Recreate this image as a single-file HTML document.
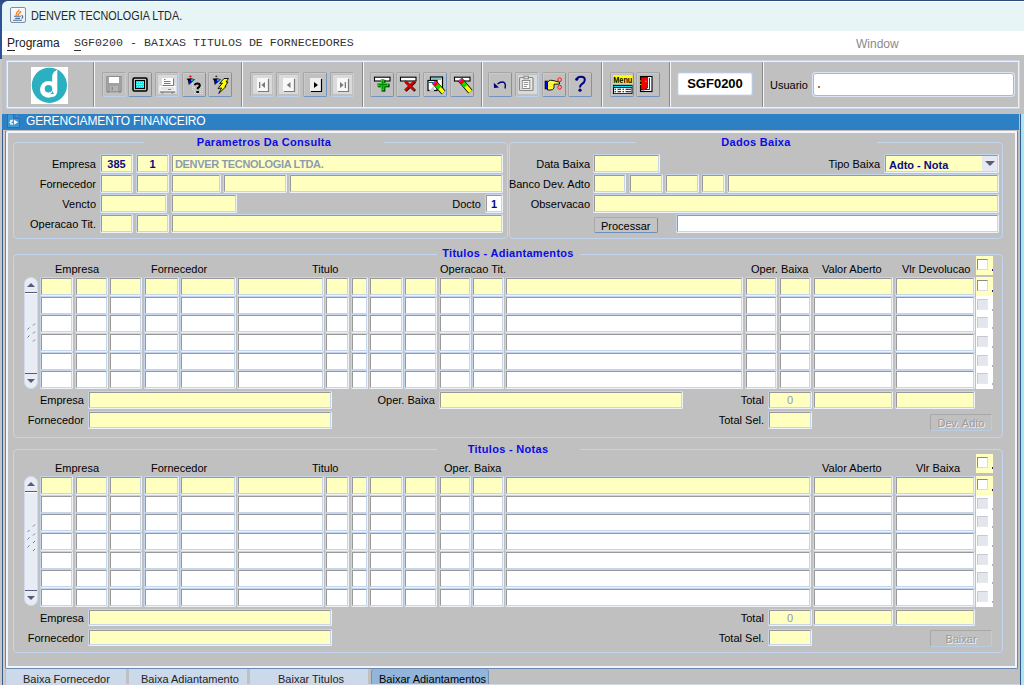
<!DOCTYPE html><html><head><meta charset="utf-8"><style>
*{margin:0;padding:0;box-sizing:border-box}
html,body{width:1024px;height:685px;overflow:hidden;background:#c0c0c0;font-family:"Liberation Sans",sans-serif}
div,span,i,b{position:absolute;display:block}
.l{font-size:11px;line-height:12px;color:#000;white-space:nowrap}
.gt{font-size:11px;font-weight:bold;line-height:12px;color:#0b0be6;white-space:nowrap;letter-spacing:0.3px}
.f{background:#c4d5ec;border-right:1px solid #eef3fa;border-bottom:1px solid #eef3fa;border-radius:2px}
.f>i{position:absolute;left:1px;top:1px;right:0;bottom:0;border-top:1px solid #999;border-left:1px solid #999;border-right:1px solid #c4d5ec;border-bottom:1px solid #c4d5ec;border-radius:1px}
.g{border:1px solid #c3d5ee;border-radius:4px}
.gap{background:#c0c0c0;height:3px}
.tb{border-top:1px solid #b4b4b4;border-left:1px solid #b4b4b4;border-right:1px solid #6e8fb8;border-bottom:1px solid #6e8fb8;border-radius:2px}
.tbd{background:#d6d6d6}
.sep{width:2px;border-left:1px solid #8a8a8a;border-right:1px solid #f4f6fa}
.v{font-size:11px;font-weight:bold;line-height:12px;color:#0a0a80;white-space:nowrap}
</style></head><body>
<div style="left:0;top:0;width:1024px;height:685px;background:#2a5294"></div>
<div style="left:0;top:0;width:1024px;height:1px;background:#30487a"></div>
<div style="left:2px;top:1px;width:1022px;height:30px;background:#e7f5f6;border-top-left-radius:6px;border-top:1px solid #f8ffff"></div>
<div style="left:2px;top:31px;width:1022px;height:24px;background:#fff"></div>
<div style="left:2px;top:55px;width:1018px;height:630px;background:#c0c0c0"></div>
<div style="left:0;top:59px;width:2px;height:626px;background:#c8c8c8"></div>
<div style="left:2px;top:55px;width:1022px;height:59px;background:#c0c0c0"></div>
<div style="left:1020px;top:114px;width:1px;height:571px;background:#3a5a8c"></div>
<div style="left:1021px;top:114px;width:3px;height:571px;background:#a8e8f4"></div>
<div style="left:10px;top:7px;width:16px;height:16px;border:1px solid #7890aa;border-radius:2px;background:linear-gradient(#fbfbfb,#e8ecf0)">
<svg width="14" height="14" style="position:absolute;left:0;top:0">
<path d="M5.3 7.8 Q4.5 5.5 6.5 3.8 Q8 2.6 8 1.4 M7.2 7.8 Q6.8 6 8.5 5 Q9.8 4.2 9.6 3" stroke="#f07818" stroke-width="1.3" fill="none"/>
<path d="M3 8.3 H9.8 M4.2 10.4 H9 M2.1 12.3 H10.9" stroke="#4a6e98" stroke-width="1.1" fill="none"/>
<path d="M10.6 7.2 Q12.8 8.6 10.6 10.6" stroke="#4a6e98" stroke-width="1.2" fill="none"/>
</svg></div>
<div style="left:31px;top:9px;font-size:12.3px;line-height:15px;color:#262626;white-space:nowrap;transform:scaleX(0.88);transform-origin:0 0">DENVER TECNOLOGIA LTDA.</div>
<div style="left:7px;top:36px;font-size:12px;line-height:14px;color:#222;white-space:nowrap"><u style="text-decoration:none;border-bottom:1px solid #222">P</u>rograma</div>
<div style="left:74px;top:36px;font-family:'Liberation Mono',monospace;font-size:11.67px;line-height:14px;color:#333;white-space:pre"><span style="position:static;display:inline;border-bottom:1px solid #333">S</span>GF0200 - BAIXAS TITULOS DE FORNECEDORES</div>
<div style="left:856px;top:37px;font-size:12px;line-height:14px;color:#8a8a8a;white-space:nowrap">Window</div>
<div style="left:6px;top:60px;width:1014px;height:49px;border:1px solid #c6d6ec;border-radius:1px"></div>
<div style="left:7px;top:61px;width:1012px;height:47px;border:1px solid #eef2f8"></div>
<div style="left:31px;top:67px;width:37px;height:37px;background:#fff">
<svg width="37" height="37" style="position:absolute;left:0;top:0">
<circle cx="18.4" cy="18.3" r="17.6" fill="#2ab0c0"/>
<circle cx="17.4" cy="22.4" r="8.4" fill="#fff"/>
<path d="M26.3 2.6 L26.3 25 Q25.5 29.5 20.5 30.6 Q23.5 28 22.5 25 L21.2 25 L21.2 8.2 Q22.5 4.5 26.3 2.6Z" fill="#fff"/>
<circle cx="17.5" cy="21.8" r="3.8" fill="#2ab0c0"/><path d="M21.3 24 Q21 26.5 19 27 L23 27 Z" fill="#2ab0c0"/>
<path d="M21.2 18 V25.5" stroke="#fff" stroke-width="0"/>
</svg></div>
<div class="sep" style="left:93px;top:62px;height:45px"></div>
<div class="sep" style="left:241px;top:62px;height:45px"></div>
<div class="sep" style="left:362px;top:62px;height:45px"></div>
<div class="sep" style="left:481px;top:62px;height:45px"></div>
<div class="sep" style="left:601px;top:62px;height:45px"></div>
<div class="sep" style="left:669px;top:62px;height:45px"></div>
<div class="sep" style="left:762px;top:62px;height:45px"></div>
<div style="left:102px;top:72px;width:24px;height:25px;border-top:1px solid #a6a6a6;border-left:1px solid #a6a6a6;border-right:1px solid #bcd0ea;border-bottom:1px solid #bcd0ea;border-radius:2px"></div>
<div style="left:103px;top:73px;width:22px;height:23px;border-top:1px solid #cacaca;border-left:1px solid #cacaca"></div>
<svg width="24" height="25" style="position:absolute;left:102px;top:72px"><path d="M4.5 4.5H19.5V19.5H4.5Z" fill="#9a9a9a" stroke="#8a8a8a" stroke-width="1" stroke-dasharray="1 1"/><rect x="5" y="5" width="14" height="14" fill="#a0a0a0"/><rect x="7" y="5" width="10" height="6" fill="#fff"/><rect x="8" y="14" width="8" height="5" fill="#b4b4b4"/><rect x="9.5" y="15" width="1.6" height="3" fill="#8a8a8a"/><path d="M5 20H8M9.5 20H10.5M11.5 20H12.5M13.5 20H14.5M16 20H19" stroke="#7a7a7a" stroke-width="1.2"/><path d="M7.5 4.5H8.5M9.5 4.5H10.5M11.5 4.5H12.5M13.5 4.5H14.5M15.5 4.5H16.5M17.5 4.5H18.5" stroke="#7a7a7a" stroke-width="1.2"/></svg>
<div style="left:128px;top:72px;width:24px;height:25px;border-top:1px solid #a6a6a6;border-left:1px solid #a6a6a6;border-right:1px solid #7294bf;border-bottom:1px solid #7294bf;border-radius:2px"></div>
<div style="left:129px;top:73px;width:22px;height:23px;border-top:1px solid #cacaca;border-left:1px solid #cacaca"></div>
<svg width="24" height="25" style="position:absolute;left:128px;top:72px"><rect x="5" y="6" width="14" height="13" rx="1.5" fill="#c0c0c0" stroke="#000" stroke-width="1.6"/><rect x="7.5" y="8.5" width="9" height="8" fill="#00e8f0" stroke="#000" stroke-width="1"/><g fill="#fff"><rect x="9" y="10" width="1" height="1"/><rect x="11" y="10" width="1" height="1"/><rect x="13" y="10" width="1" height="1"/><rect x="15" y="10" width="1" height="1"/><rect x="8" y="12" width="8" height="0.8" fill="#7fd"/><rect x="9" y="14" width="1" height="1"/><rect x="11" y="14" width="1" height="1"/><rect x="13" y="14" width="1" height="1"/><rect x="15" y="14" width="1" height="1"/></g></svg>
<div style="left:155px;top:72px;width:24px;height:25px;border-top:1px solid #a6a6a6;border-left:1px solid #a6a6a6;border-right:1px solid #bcd0ea;border-bottom:1px solid #bcd0ea;border-radius:2px"></div>
<div style="left:156px;top:73px;width:22px;height:23px;border-top:1px solid #cacaca;border-left:1px solid #cacaca"></div>
<div style="left:158px;top:75px;width:19px;height:19px;background:#dadada"></div>
<svg width="24" height="25" style="position:absolute;left:155px;top:72px"><rect x="7" y="6" width="11" height="8" fill="#fff"/><path d="M7.5 13.5H18.5V6.5" stroke="#777" stroke-width="1" fill="none"/><path d="M9 7.5H10.5M9 9.5H15.5M9 11.5H15.5" stroke="#777" stroke-width="1"/><rect x="5" y="14.5" width="15" height="4.5" fill="#e4e4e4" stroke="#fff" stroke-width="1"/><path d="M13 17.5h3" stroke="#888"/><path d="M5 20H20" stroke="#777" stroke-width="1.2"/><path d="M6.5 21H8.5M16.5 21H18.5" stroke="#777" stroke-width="1.2"/></svg>
<div style="left:182px;top:72px;width:24px;height:25px;border-top:1px solid #a6a6a6;border-left:1px solid #a6a6a6;border-right:1px solid #7294bf;border-bottom:1px solid #7294bf;border-radius:2px"></div>
<div style="left:183px;top:73px;width:22px;height:23px;border-top:1px solid #cacaca;border-left:1px solid #cacaca"></div>
<svg width="24" height="25" style="position:absolute;left:182px;top:72px"><path d="M7.5 4.3H9.2" stroke="#000" stroke-width="1"/><path d="M4.5 6.8 L6 8.5 L6.8 13 L13 7.2 L9 6.3Z" fill="#000"/><path d="M6.5 9 L7.2 12 L11 8.5 L8 8.3Z" fill="#0000ff"/><path d="M8.5 7.5 L12 7.3 L9.8 9.3Z" fill="#00ffff"/><circle cx="8.5" cy="4.6" r="0.9" fill="#f00"/><rect x="10.0" y="11.0" width="1" height="1" fill="#ffff00"/><rect x="12.0" y="11.0" width="1" height="1" fill="#ffff00"/><rect x="10.0" y="13.0" width="1" height="1" fill="#ffff00"/><rect x="10.0" y="15.0" width="1" height="1" fill="#ffff00"/><rect x="12.0" y="15.0" width="1" height="1" fill="#ffff00"/><rect x="10.0" y="17.0" width="1" height="1" fill="#ffff00"/><rect x="12.0" y="17.0" width="1" height="1" fill="#ffff00"/><rect x="12.0" y="19.0" width="1" height="1" fill="#ffff00"/><rect x="12.0" y="21.0" width="1" height="1" fill="#ffff00"/><rect x="14.0" y="21.0" width="1" height="1" fill="#ffff00"/><rect x="16.0" y="21.0" width="1" height="1" fill="#ffff00"/><rect x="18.0" y="21.0" width="1" height="1" fill="#ffff00"/><rect x="20.0" y="21.0" width="1" height="1" fill="#ffff00"/><rect x="18.0" y="19.0" width="1" height="1" fill="#ffff00"/><rect x="20.0" y="19.0" width="1" height="1" fill="#ffff00"/><rect x="18.0" y="17.0" width="1" height="1" fill="#ffff00"/><rect x="20.0" y="17.0" width="1" height="1" fill="#ffff00"/><rect x="18.0" y="15.0" width="1" height="1" fill="#ffff00"/><rect x="20.0" y="15.0" width="1" height="1" fill="#ffff00"/><rect x="20.0" y="13.0" width="1" height="1" fill="#ffff00"/><path d="M13 13.2 Q13 11.5 15.3 11.5 Q17.8 11.5 17.8 13.5 Q17.8 15 15.8 16 V17.3" stroke="#000" stroke-width="2" fill="none"/><rect x="14.3" y="19" width="2.6" height="2" fill="#000"/></svg>
<div style="left:208px;top:72px;width:24px;height:25px;border-top:1px solid #a6a6a6;border-left:1px solid #a6a6a6;border-right:1px solid #7294bf;border-bottom:1px solid #7294bf;border-radius:2px"></div>
<div style="left:209px;top:73px;width:22px;height:23px;border-top:1px solid #cacaca;border-left:1px solid #cacaca"></div>
<svg width="24" height="25" style="position:absolute;left:208px;top:72px"><path d="M7.5 4.3H9.2" stroke="#000" stroke-width="1"/><path d="M4.5 6.8 L6 8.5 L6.8 13 L13 7.2 L9 6.3Z" fill="#000"/><path d="M6.5 9 L7.2 12 L11 8.5 L8 8.3Z" fill="#0000ff"/><path d="M8.5 7.5 L12 7.3 L9.8 9.3Z" fill="#00ffff"/><path d="M16 6.5 L20.5 6.5 L18 10 L20 10 L17 14.5 L18 14.5 L10.7 21.5 L13.5 16 L10 16.5 L14.5 11 L11.5 11.5 Z" fill="#ffff00" stroke="#000" stroke-width="0.9"/><path d="M11.5 11.5 L9.5 16.5" stroke="#9a9ab0" stroke-width="0.8"/></svg>
<div style="left:250px;top:72px;width:24px;height:25px;border-top:1px solid #a6a6a6;border-left:1px solid #a6a6a6;border-right:1px solid #bcd0ea;border-bottom:1px solid #bcd0ea;border-radius:2px"></div>
<div style="left:251px;top:73px;width:22px;height:23px;border-top:1px solid #cacaca;border-left:1px solid #cacaca"></div>
<div style="left:253px;top:75px;width:19px;height:19px;background:#dadada"></div>
<svg width="24" height="25" style="position:absolute;left:250px;top:72px"><rect x="7" y="6" width="11" height="13" fill="#f8f8f8"/><path d="M8 19.5H18.5V7" stroke="#7a7a7a" stroke-width="1.2" fill="none"/><rect x="9" y="10" width="1.3" height="6" fill="#7a7a7a"/><path d="M15 10L11.3 13L15 16Z" fill="#7a7a7a"/></svg>
<div style="left:276px;top:72px;width:24px;height:25px;border-top:1px solid #a6a6a6;border-left:1px solid #a6a6a6;border-right:1px solid #bcd0ea;border-bottom:1px solid #bcd0ea;border-radius:2px"></div>
<div style="left:277px;top:73px;width:22px;height:23px;border-top:1px solid #cacaca;border-left:1px solid #cacaca"></div>
<div style="left:279px;top:75px;width:19px;height:19px;background:#dadada"></div>
<svg width="24" height="25" style="position:absolute;left:276px;top:72px"><rect x="7" y="6" width="11" height="13" fill="#f8f8f8"/><path d="M8 19.5H18.5V7" stroke="#7a7a7a" stroke-width="1.2" fill="none"/><path d="M14.5 10L10.8 13L14.5 16Z" fill="#7a7a7a"/></svg>
<div style="left:303px;top:72px;width:24px;height:25px;border-top:1px solid #a6a6a6;border-left:1px solid #a6a6a6;border-right:1px solid #7294bf;border-bottom:1px solid #7294bf;border-radius:2px"></div>
<div style="left:304px;top:73px;width:22px;height:23px;border-top:1px solid #cacaca;border-left:1px solid #cacaca"></div>
<svg width="24" height="25" style="position:absolute;left:303px;top:72px"><rect x="7" y="6" width="11" height="13" fill="#f0f0f0"/><path d="M8 19.5H18.5V7" stroke="#000" stroke-width="1.2" fill="none"/><path d="M11 10L15 13L11 16Z" fill="#000"/></svg>
<div style="left:330px;top:72px;width:24px;height:25px;border-top:1px solid #a6a6a6;border-left:1px solid #a6a6a6;border-right:1px solid #bcd0ea;border-bottom:1px solid #bcd0ea;border-radius:2px"></div>
<div style="left:331px;top:73px;width:22px;height:23px;border-top:1px solid #cacaca;border-left:1px solid #cacaca"></div>
<div style="left:333px;top:75px;width:19px;height:19px;background:#dadada"></div>
<svg width="24" height="25" style="position:absolute;left:330px;top:72px"><rect x="7" y="6" width="11" height="13" fill="#f8f8f8"/><path d="M8 19.5H18.5V7" stroke="#7a7a7a" stroke-width="1.2" fill="none"/><rect x="14.7" y="10" width="1.3" height="6" fill="#7a7a7a"/><path d="M10 10L13.7 13L10 16Z" fill="#7a7a7a"/></svg>
<div style="left:370px;top:72px;width:24px;height:25px;border-top:1px solid #a6a6a6;border-left:1px solid #a6a6a6;border-right:1px solid #7294bf;border-bottom:1px solid #7294bf;border-radius:2px"></div>
<div style="left:371px;top:73px;width:22px;height:23px;border-top:1px solid #cacaca;border-left:1px solid #cacaca"></div>
<svg width="24" height="25" style="position:absolute;left:370px;top:72px"><rect x="4.5" y="5.2" width="15.5" height="3.8" fill="#fff" stroke="#000" stroke-width="1.1"/><path d="M13.5 8V19.5 M8 13.5H19.5" stroke="#000" stroke-width="3.6"/><path d="M12.7 7V18.5 M7 12.7H18.5" stroke="#00e800" stroke-width="3.6"/><path d="M12.7 8.5V17 M8.5 12.7H17" stroke="#008800" stroke-width="1.2"/></svg>
<div style="left:396px;top:72px;width:24px;height:25px;border-top:1px solid #a6a6a6;border-left:1px solid #a6a6a6;border-right:1px solid #7294bf;border-bottom:1px solid #7294bf;border-radius:2px"></div>
<div style="left:397px;top:73px;width:22px;height:23px;border-top:1px solid #cacaca;border-left:1px solid #cacaca"></div>
<svg width="24" height="25" style="position:absolute;left:396px;top:72px"><rect x="4.5" y="5.2" width="15.5" height="3.8" fill="#fff" stroke="#000" stroke-width="1.1"/><path d="M9 9.2L18.5 18.3M18.5 9.2L9 18.3" stroke="#000" stroke-width="2.6" transform="translate(0.6,0.6)"/><path d="M9 9.2L18.5 18.3M18.5 9.2L9 18.3" stroke="#d40000" stroke-width="2.4"/></svg>
<div style="left:423px;top:72px;width:24px;height:25px;border-top:1px solid #a6a6a6;border-left:1px solid #a6a6a6;border-right:1px solid #7294bf;border-bottom:1px solid #7294bf;border-radius:2px"></div>
<div style="left:424px;top:73px;width:22px;height:23px;border-top:1px solid #cacaca;border-left:1px solid #cacaca"></div>
<svg width="24" height="25" style="position:absolute;left:423px;top:72px"><rect x="7.5" y="5" width="12" height="12" fill="#fff" stroke="#000" stroke-width="1.2"/><path d="M8.5 7H18.5" stroke="#008888" stroke-width="1"/><rect x="5" y="8.5" width="9" height="10" fill="#fff" stroke="#000" stroke-width="1.2"/><path d="M6 10.5H13" stroke="#008888" stroke-width="1"/><path d="M6 19 L11 14 V19Z" fill="#c8c8c8"/><path d="M11 10 L20.5 20.5" stroke="#000" stroke-width="5.4"/><path d="M11 10 L20.5 20.5" stroke="#ffff00" stroke-width="3.8"/><path d="M11 10 L14 13.5" stroke="#ff0000" stroke-width="3.8"/><path d="M11 10 L12 11" stroke="#ff00ff" stroke-width="3.8"/><path d="M14 13.5 L16.5 16.3" stroke="#00e000" stroke-width="3.8"/></svg>
<div style="left:450px;top:72px;width:24px;height:25px;border-top:1px solid #a6a6a6;border-left:1px solid #a6a6a6;border-right:1px solid #7294bf;border-bottom:1px solid #7294bf;border-radius:2px"></div>
<div style="left:451px;top:73px;width:22px;height:23px;border-top:1px solid #cacaca;border-left:1px solid #cacaca"></div>
<svg width="24" height="25" style="position:absolute;left:450px;top:72px"><rect x="4.5" y="5.2" width="15.5" height="3.8" fill="#fff" stroke="#000" stroke-width="1.1"/><path d="M10 7.5 L20.5 19.8" stroke="#000" stroke-width="5.4"/><path d="M10 7.5 L20.5 19.8" stroke="#ffff00" stroke-width="3.8"/><path d="M10 7.5 L13.2 11.2" stroke="#ff0000" stroke-width="3.8"/><path d="M10 7.5 L11 8.7" stroke="#ff00ff" stroke-width="3.8"/><path d="M13.2 11.2 L15.8 14.3" stroke="#00e000" stroke-width="3.8"/></svg>
<div style="left:488px;top:72px;width:24px;height:25px;border-top:1px solid #a6a6a6;border-left:1px solid #a6a6a6;border-right:1px solid #7294bf;border-bottom:1px solid #7294bf;border-radius:2px"></div>
<div style="left:489px;top:73px;width:22px;height:23px;border-top:1px solid #cacaca;border-left:1px solid #cacaca"></div>
<svg width="24" height="25" style="position:absolute;left:488px;top:72px"><path d="M9.5 12 Q12.5 9.5 15.5 10.2 Q18.2 11.5 17 16.5" stroke="#000080" stroke-width="1.4" fill="none"/><path d="M5.8 10.8 L6 16 L11 15.5Z" fill="#000080"/></svg>
<div style="left:515px;top:72px;width:24px;height:25px;border-top:1px solid #a6a6a6;border-left:1px solid #a6a6a6;border-right:1px solid #bcd0ea;border-bottom:1px solid #bcd0ea;border-radius:2px"></div>
<div style="left:516px;top:73px;width:22px;height:23px;border-top:1px solid #cacaca;border-left:1px solid #cacaca"></div>
<div style="left:518px;top:75px;width:19px;height:19px;background:#dadada"></div>
<svg width="24" height="25" style="position:absolute;left:515px;top:72px"><rect x="4.5" y="5.5" width="13.5" height="13" rx="1" fill="#e8e8e8" stroke="#8a8a8a" stroke-width="1.2"/><rect x="7.3" y="8.5" width="7.5" height="8" fill="#fff" stroke="#8a8a8a" stroke-width="1"/><rect x="8.8" y="4.2" width="4.6" height="2.6" fill="#ddd" stroke="#8a8a8a" stroke-width="1"/><path d="M8.8 10.5H13.3M8.8 12.5H13.3M8.8 14.5H12" stroke="#8a8a8a" stroke-width="0.9"/></svg>
<div style="left:542px;top:72px;width:24px;height:25px;border-top:1px solid #a6a6a6;border-left:1px solid #a6a6a6;border-right:1px solid #7294bf;border-bottom:1px solid #7294bf;border-radius:2px"></div>
<div style="left:543px;top:73px;width:22px;height:23px;border-top:1px solid #cacaca;border-left:1px solid #cacaca"></div>
<svg width="24" height="25" style="position:absolute;left:542px;top:72px"><rect x="3" y="9" width="2.5" height="8" fill="#0000ff" stroke="#000" stroke-width="0.6"/><path d="M5.5 10 Q8 7.2 11 8.5 L17.5 10.2 V12 L12 12.2 V16 Q11 18.3 8 18 H5.5Z" fill="#ffff40" stroke="#000" stroke-width="0.9"/><path d="M7 11v5M9 11v5M11 12v4" stroke="#c8b800" stroke-width="0.5" stroke-dasharray="0.8 0.8"/><ellipse cx="17.6" cy="7.8" rx="1.8" ry="2" fill="none" stroke="#f00" stroke-width="0.9"/><ellipse cx="17.6" cy="15.2" rx="1.8" ry="2" fill="none" stroke="#f00" stroke-width="0.9"/></svg>
<div style="left:568px;top:72px;width:24px;height:25px;border-top:1px solid #a6a6a6;border-left:1px solid #a6a6a6;border-right:1px solid #7294bf;border-bottom:1px solid #7294bf;border-radius:2px"></div>
<div style="left:569px;top:73px;width:22px;height:23px;border-top:1px solid #cacaca;border-left:1px solid #cacaca"></div>
<svg width="24" height="25" style="position:absolute;left:568px;top:72px"><path d="M8.6 7.6 Q9.6 4.8 13 4.8 Q16.8 4.8 16.8 8 Q16.8 10.2 13.8 12.2 Q12 13.3 12 15.5" stroke="#000080" stroke-width="2" fill="none"/><circle cx="8.7" cy="7.3" r="1.5" fill="#000080"/><circle cx="12" cy="18.2" r="1.6" fill="#000080"/></svg>
<div style="left:610px;top:72px;width:24px;height:25px;border-top:1px solid #a6a6a6;border-left:1px solid #a6a6a6;border-right:1px solid #7294bf;border-bottom:1px solid #7294bf;border-radius:2px"></div>
<div style="left:611px;top:73px;width:22px;height:23px;border-top:1px solid #cacaca;border-left:1px solid #cacaca"></div>
<svg width="24" height="25" style="position:absolute;left:610px;top:72px"><rect x="3" y="3.2" width="19.5" height="8.3" fill="#ffff00"/><text x="3.3" y="10.8" font-family="Liberation Sans" font-weight="bold" font-size="9" fill="#000" textLength="19" lengthAdjust="spacingAndGlyphs">Menu</text><rect x="3" y="12.9" width="19.5" height="9.1" fill="#000"/><rect x="3.5" y="13.8" width="18.5" height="1.4" fill="#00e0f0"/><rect x="4" y="16" width="17.5" height="5.2" fill="#fff"/><path d="M4.5 17.3H6M7.5 17.3H11M12.5 17.3H14M15.5 17.3H21M4.5 19.8H6M7.5 19.8H11M12.5 19.8H14M15.5 19.8H21" stroke="#000" stroke-width="1.1"/></svg>
<div style="left:636px;top:72px;width:24px;height:25px;border-top:1px solid #a6a6a6;border-left:1px solid #a6a6a6;border-right:1px solid #7294bf;border-bottom:1px solid #7294bf;border-radius:2px"></div>
<div style="left:637px;top:73px;width:22px;height:23px;border-top:1px solid #cacaca;border-left:1px solid #cacaca"></div>
<svg width="24" height="25" style="position:absolute;left:636px;top:72px"><rect x="4.5" y="4.5" width="11.5" height="15" fill="#fff" stroke="#000" stroke-width="1.1"/><path d="M13.5 6V17.5H9" stroke="#000" stroke-width="0.8" fill="none"/><path d="M4.8 5 L11.5 5 L11.5 16 L8 18 L4.8 18Z" fill="#f00000" stroke="#000" stroke-width="0.6"/><rect x="9.3" y="8.8" width="1" height="1" fill="#ff0"/><rect x="4.2" y="8.5" width="1" height="1" fill="#ff0"/><rect x="4.2" y="12" width="1" height="1" fill="#ff0"/></svg>
<div style="left:677px;top:72px;width:76px;height:24px;background:#fff;border:1px solid #b8c8e0;border-radius:3px;box-shadow:inset 0 0 0 1px #e8eef6"></div>
<div style="left:677px;top:75px;width:76px;text-align:center;font-size:13px;font-weight:bold;line-height:17px;color:#000">SGF0200</div>
<div class="l" style="left:770px;top:79px;">Usuario</div>
<div style="left:813px;top:73px;width:201px;height:23px;background:#fff;border:1px solid #a8b8d0;border-radius:3px;box-shadow:0 0 0 1px #dbe4f0"></div>
<div style="left:818px;top:86px;width:2px;height:2px;background:#c07030"></div>
<div style="left:2px;top:114px;width:1017px;height:16px;background:#2e80c4"></div>
<svg width="14" height="15" style="position:absolute;left:7px;top:114px">
<path d="M0.5 0 H6.5 V4.5 H12.5 V13.5 H0.5Z" fill="#3d98d8" stroke="#2a70b0" stroke-width="1"/>
<rect x="9" y="1.5" width="2" height="1" fill="#4aa0dc"/>
<path d="M5.8 5.2 L4.6 6.3 L3.2 5.8 L3.3 7.4 L2 8.3 L3.3 9.2 L3.2 10.8 L4.6 10.3 L5.8 11.4 Z" fill="#fff"/>
<circle cx="5.2" cy="8.3" r="0.9" fill="#3d98d8"/>
<path d="M7 5.8 L11 8.3 L7 10.8Z" fill="#fff"/></svg>
<div style="left:26px;top:114px;font-size:12px;line-height:14px;color:#fff;white-space:nowrap;letter-spacing:-0.15px">GERENCIAMENTO FINANCEIRO</div>
<div style="left:2px;top:130px;width:1px;height:555px;background:#3a5a8c"></div>
<div style="left:3px;top:130px;width:2px;height:555px;background:#d0ccc4"></div>
<div style="left:5px;top:131px;width:1013px;height:538px;border:1px solid #6a88b0;border-top:none;border-radius:0 0 2px 2px"></div>
<div style="left:6px;top:131px;width:1011px;height:537px;border:2px solid #f2f6fc;border-radius:2px 0 1px 1px"></div>
<div class="g" style="left:13px;top:142px;width:495px;height:97px"></div>
<div class="gap" style="left:144px;top:141px;width:240px"></div>
<div class="gt" style="left:114px;width:300px;text-align:center;top:136px;">Parametros Da Consulta</div>
<div class="g" style="left:509px;top:142px;width:494px;height:97px"></div>
<div class="gap" style="left:636px;top:141px;width:241px"></div>
<div class="gt" style="left:606px;width:300px;text-align:center;top:136px;">Dados Baixa</div>
<div class="l" style="right:928px;top:158px;">Empresa</div>
<div class="l" style="right:928px;top:178px;">Fornecedor</div>
<div class="l" style="right:928px;top:198px;">Vencto</div>
<div class="l" style="right:928px;top:218px;">Operacao Tit.</div>
<div class="f" style="left:100px;top:154px;width:33px;height:19px;"><i style="background:#ffffc0"></i></div>
<div class="f" style="left:136px;top:154px;width:33px;height:19px;"><i style="background:#ffffc0"></i></div>
<div class="f" style="left:171px;top:154px;width:332px;height:19px;"><i style="background:#ffffc0"></i></div>
<div class="v" style="left:100px;top:158px;width:33px;text-align:center">385</div>
<div class="v" style="left:136px;top:158px;width:33px;text-align:center">1</div>
<div class="v" style="left:175px;top:158px;color:#8c9cb0;letter-spacing:-0.35px">DENVER TECNOLOGIA LTDA.</div>
<div class="f" style="left:100px;top:174px;width:33px;height:19px;"><i style="background:#ffffc0"></i></div>
<div class="f" style="left:136px;top:174px;width:33px;height:19px;"><i style="background:#ffffc0"></i></div>
<div class="f" style="left:171px;top:174px;width:50px;height:19px;"><i style="background:#ffffc0"></i></div>
<div class="f" style="left:223px;top:174px;width:64px;height:19px;"><i style="background:#ffffc0"></i></div>
<div class="f" style="left:289px;top:174px;width:214px;height:19px;"><i style="background:#ffffc0"></i></div>
<div class="f" style="left:100px;top:194px;width:67px;height:19px;"><i style="background:#ffffc0"></i></div>
<div class="f" style="left:171px;top:194px;width:66px;height:19px;"><i style="background:#ffffc0"></i></div>
<div class="l" style="right:543px;top:198px;">Docto</div>
<div class="f" style="left:485px;top:194px;width:18px;height:19px;"><i style="background:#fff"></i></div>
<div class="v" style="left:485px;top:198px;width:18px;text-align:center">1</div>
<div class="f" style="left:100px;top:214px;width:33px;height:19px;"><i style="background:#ffffc0"></i></div>
<div class="f" style="left:136px;top:214px;width:33px;height:19px;"><i style="background:#ffffc0"></i></div>
<div class="f" style="left:171px;top:214px;width:332px;height:19px;"><i style="background:#ffffc0"></i></div>
<div class="l" style="right:434px;top:158px;">Data Baixa</div>
<div class="f" style="left:593px;top:154px;width:67px;height:19px;"><i style="background:#ffffc0"></i></div>
<div class="l" style="right:144px;top:158px;">Tipo Baixa</div>
<div class="f" style="left:884px;top:154px;width:115px;height:19px;"><i style="background:#ffffc0"></i></div>
<div style="left:982px;top:156px;width:15px;height:15px;background:#e6e8f2"></div>
<svg width="10" height="6" style="position:absolute;left:985px;top:161px"><path d="M0 0H10L5 5Z" fill="#5c5c70"/></svg>
<div class="v" style="left:889px;top:159px;color:#0a0a80">Adto - Nota</div>
<div class="l" style="right:434px;top:178px;">Banco Dev. Adto</div>
<div class="f" style="left:593px;top:174px;width:33px;height:19px;"><i style="background:#ffffc0"></i></div>
<div class="f" style="left:629px;top:174px;width:34px;height:19px;"><i style="background:#ffffc0"></i></div>
<div class="f" style="left:665px;top:174px;width:34px;height:19px;"><i style="background:#ffffc0"></i></div>
<div class="f" style="left:701px;top:174px;width:24px;height:19px;"><i style="background:#ffffc0"></i></div>
<div class="f" style="left:727px;top:174px;width:272px;height:19px;"><i style="background:#ffffc0"></i></div>
<div class="l" style="right:434px;top:198px;">Observacao</div>
<div class="f" style="left:593px;top:194px;width:406px;height:19px;"><i style="background:#ffffc0"></i></div>
<div style="left:594px;top:217px;width:64px;height:16px;background:#c3c3c3;border:1px solid #aaaaaa;border-right-color:#7090b8;border-bottom-color:#7090b8;border-radius:2px"></div>
<div class="l" style="left:601px;top:220px;">Processar</div>
<div class="f" style="left:676px;top:214px;width:323px;height:19px;"><i style="background:#fff"></i></div>
<div class="g" style="left:13px;top:254px;width:990px;height:184px"></div>
<div class="gap" style="left:437px;top:253px;width:143px"></div>
<div class="gt" style="left:358px;width:300px;text-align:center;top:247px;">Titulos - Adiantamentos</div>
<div class="l" style="left:55px;top:263px;">Empresa</div>
<div class="l" style="left:151px;top:263px;">Fornecedor</div>
<div class="l" style="left:312px;top:263px;">Titulo</div>
<div class="l" style="left:440px;top:263px;">Operacao Tit.</div>
<div class="l" style="left:751px;top:263px;">Oper. Baixa</div>
<div class="l" style="left:822px;top:263px;">Valor Aberto</div>
<div class="l" style="left:902px;top:263px;">Vlr Devolucao</div>
<div style="left:976px;top:256px;width:17px;height:19px;background:#ffffc0"></div>
<div style="left:977px;top:259px;width:11px;height:11px;background:#fff;border:1px solid #8a8a8a;border-right-color:#dcdcdc;border-bottom-color:#dcdcdc"></div>
<div style="left:992px;top:269px;width:1px;height:2px;background:#30208a"></div>
<div class="f" style="left:40px;top:277px;width:33px;height:19px;"><i style="background:#ffffc0"></i></div>
<div class="f" style="left:75px;top:277px;width:33px;height:19px;"><i style="background:#ffffc0"></i></div>
<div class="f" style="left:109px;top:277px;width:33px;height:19px;"><i style="background:#ffffc0"></i></div>
<div class="f" style="left:144px;top:277px;width:35px;height:19px;"><i style="background:#ffffc0"></i></div>
<div class="f" style="left:180px;top:277px;width:56px;height:19px;"><i style="background:#ffffc0"></i></div>
<div class="f" style="left:237px;top:277px;width:87px;height:19px;"><i style="background:#ffffc0"></i></div>
<div class="f" style="left:325px;top:277px;width:24px;height:19px;"><i style="background:#ffffc0"></i></div>
<div class="f" style="left:351px;top:277px;width:17px;height:19px;"><i style="background:#ffffc0"></i></div>
<div class="f" style="left:369px;top:277px;width:34px;height:19px;"><i style="background:#ffffc0"></i></div>
<div class="f" style="left:404px;top:277px;width:33px;height:19px;"><i style="background:#ffffc0"></i></div>
<div class="f" style="left:439px;top:277px;width:32px;height:19px;"><i style="background:#ffffc0"></i></div>
<div class="f" style="left:472px;top:277px;width:32px;height:19px;"><i style="background:#ffffc0"></i></div>
<div class="f" style="left:505px;top:277px;width:238px;height:19px;"><i style="background:#ffffc0"></i></div>
<div class="f" style="left:745px;top:277px;width:32px;height:19px;"><i style="background:#ffffc0"></i></div>
<div class="f" style="left:779px;top:277px;width:32px;height:19px;"><i style="background:#ffffc0"></i></div>
<div class="f" style="left:813px;top:277px;width:80px;height:19px;"><i style="background:#ffffc0"></i></div>
<div class="f" style="left:895px;top:277px;width:80px;height:19px;"><i style="background:#ffffc0"></i></div>
<div style="left:976px;top:277px;width:17px;height:19px;background:#ffffc0"></div>
<div style="left:977px;top:280px;width:11px;height:11px;background:#fff;border:1px solid #8a8a8a;border-right-color:#dcdcdc;border-bottom-color:#dcdcdc"></div>
<div style="left:992px;top:290px;width:1px;height:2px;background:#30208a"></div>
<div class="f" style="left:40px;top:296px;width:33px;height:19px;"><i style="background:#fff"></i></div>
<div class="f" style="left:75px;top:296px;width:33px;height:19px;"><i style="background:#fff"></i></div>
<div class="f" style="left:109px;top:296px;width:33px;height:19px;"><i style="background:#fff"></i></div>
<div class="f" style="left:144px;top:296px;width:35px;height:19px;"><i style="background:#fff"></i></div>
<div class="f" style="left:180px;top:296px;width:56px;height:19px;"><i style="background:#fff"></i></div>
<div class="f" style="left:237px;top:296px;width:87px;height:19px;"><i style="background:#fff"></i></div>
<div class="f" style="left:325px;top:296px;width:24px;height:19px;"><i style="background:#fff"></i></div>
<div class="f" style="left:351px;top:296px;width:17px;height:19px;"><i style="background:#fff"></i></div>
<div class="f" style="left:369px;top:296px;width:34px;height:19px;"><i style="background:#fff"></i></div>
<div class="f" style="left:404px;top:296px;width:33px;height:19px;"><i style="background:#fff"></i></div>
<div class="f" style="left:439px;top:296px;width:32px;height:19px;"><i style="background:#fff"></i></div>
<div class="f" style="left:472px;top:296px;width:32px;height:19px;"><i style="background:#fff"></i></div>
<div class="f" style="left:505px;top:296px;width:238px;height:19px;"><i style="background:#fff"></i></div>
<div class="f" style="left:745px;top:296px;width:32px;height:19px;"><i style="background:#fff"></i></div>
<div class="f" style="left:779px;top:296px;width:32px;height:19px;"><i style="background:#fff"></i></div>
<div class="f" style="left:813px;top:296px;width:80px;height:19px;"><i style="background:#fff"></i></div>
<div class="f" style="left:895px;top:296px;width:80px;height:19px;"><i style="background:#fff"></i></div>
<div style="left:976px;top:296px;width:17px;height:19px;background:#fff"></div>
<div style="left:977px;top:299px;width:11px;height:11px;background:#e4e6ee;border:1px solid #c8c8d0;border-right-color:#e8e8e8;border-bottom-color:#e8e8e8"></div>
<div style="left:992px;top:309px;width:1px;height:2px;background:#c0a0c8"></div>
<div class="f" style="left:40px;top:314px;width:33px;height:19px;"><i style="background:#fff"></i></div>
<div class="f" style="left:75px;top:314px;width:33px;height:19px;"><i style="background:#fff"></i></div>
<div class="f" style="left:109px;top:314px;width:33px;height:19px;"><i style="background:#fff"></i></div>
<div class="f" style="left:144px;top:314px;width:35px;height:19px;"><i style="background:#fff"></i></div>
<div class="f" style="left:180px;top:314px;width:56px;height:19px;"><i style="background:#fff"></i></div>
<div class="f" style="left:237px;top:314px;width:87px;height:19px;"><i style="background:#fff"></i></div>
<div class="f" style="left:325px;top:314px;width:24px;height:19px;"><i style="background:#fff"></i></div>
<div class="f" style="left:351px;top:314px;width:17px;height:19px;"><i style="background:#fff"></i></div>
<div class="f" style="left:369px;top:314px;width:34px;height:19px;"><i style="background:#fff"></i></div>
<div class="f" style="left:404px;top:314px;width:33px;height:19px;"><i style="background:#fff"></i></div>
<div class="f" style="left:439px;top:314px;width:32px;height:19px;"><i style="background:#fff"></i></div>
<div class="f" style="left:472px;top:314px;width:32px;height:19px;"><i style="background:#fff"></i></div>
<div class="f" style="left:505px;top:314px;width:238px;height:19px;"><i style="background:#fff"></i></div>
<div class="f" style="left:745px;top:314px;width:32px;height:19px;"><i style="background:#fff"></i></div>
<div class="f" style="left:779px;top:314px;width:32px;height:19px;"><i style="background:#fff"></i></div>
<div class="f" style="left:813px;top:314px;width:80px;height:19px;"><i style="background:#fff"></i></div>
<div class="f" style="left:895px;top:314px;width:80px;height:19px;"><i style="background:#fff"></i></div>
<div style="left:976px;top:314px;width:17px;height:19px;background:#fff"></div>
<div style="left:977px;top:317px;width:11px;height:11px;background:#e4e6ee;border:1px solid #c8c8d0;border-right-color:#e8e8e8;border-bottom-color:#e8e8e8"></div>
<div style="left:992px;top:327px;width:1px;height:2px;background:#c0a0c8"></div>
<div class="f" style="left:40px;top:333px;width:33px;height:19px;"><i style="background:#fff"></i></div>
<div class="f" style="left:75px;top:333px;width:33px;height:19px;"><i style="background:#fff"></i></div>
<div class="f" style="left:109px;top:333px;width:33px;height:19px;"><i style="background:#fff"></i></div>
<div class="f" style="left:144px;top:333px;width:35px;height:19px;"><i style="background:#fff"></i></div>
<div class="f" style="left:180px;top:333px;width:56px;height:19px;"><i style="background:#fff"></i></div>
<div class="f" style="left:237px;top:333px;width:87px;height:19px;"><i style="background:#fff"></i></div>
<div class="f" style="left:325px;top:333px;width:24px;height:19px;"><i style="background:#fff"></i></div>
<div class="f" style="left:351px;top:333px;width:17px;height:19px;"><i style="background:#fff"></i></div>
<div class="f" style="left:369px;top:333px;width:34px;height:19px;"><i style="background:#fff"></i></div>
<div class="f" style="left:404px;top:333px;width:33px;height:19px;"><i style="background:#fff"></i></div>
<div class="f" style="left:439px;top:333px;width:32px;height:19px;"><i style="background:#fff"></i></div>
<div class="f" style="left:472px;top:333px;width:32px;height:19px;"><i style="background:#fff"></i></div>
<div class="f" style="left:505px;top:333px;width:238px;height:19px;"><i style="background:#fff"></i></div>
<div class="f" style="left:745px;top:333px;width:32px;height:19px;"><i style="background:#fff"></i></div>
<div class="f" style="left:779px;top:333px;width:32px;height:19px;"><i style="background:#fff"></i></div>
<div class="f" style="left:813px;top:333px;width:80px;height:19px;"><i style="background:#fff"></i></div>
<div class="f" style="left:895px;top:333px;width:80px;height:19px;"><i style="background:#fff"></i></div>
<div style="left:976px;top:333px;width:17px;height:19px;background:#fff"></div>
<div style="left:977px;top:336px;width:11px;height:11px;background:#e4e6ee;border:1px solid #c8c8d0;border-right-color:#e8e8e8;border-bottom-color:#e8e8e8"></div>
<div style="left:992px;top:346px;width:1px;height:2px;background:#c0a0c8"></div>
<div class="f" style="left:40px;top:352px;width:33px;height:19px;"><i style="background:#fff"></i></div>
<div class="f" style="left:75px;top:352px;width:33px;height:19px;"><i style="background:#fff"></i></div>
<div class="f" style="left:109px;top:352px;width:33px;height:19px;"><i style="background:#fff"></i></div>
<div class="f" style="left:144px;top:352px;width:35px;height:19px;"><i style="background:#fff"></i></div>
<div class="f" style="left:180px;top:352px;width:56px;height:19px;"><i style="background:#fff"></i></div>
<div class="f" style="left:237px;top:352px;width:87px;height:19px;"><i style="background:#fff"></i></div>
<div class="f" style="left:325px;top:352px;width:24px;height:19px;"><i style="background:#fff"></i></div>
<div class="f" style="left:351px;top:352px;width:17px;height:19px;"><i style="background:#fff"></i></div>
<div class="f" style="left:369px;top:352px;width:34px;height:19px;"><i style="background:#fff"></i></div>
<div class="f" style="left:404px;top:352px;width:33px;height:19px;"><i style="background:#fff"></i></div>
<div class="f" style="left:439px;top:352px;width:32px;height:19px;"><i style="background:#fff"></i></div>
<div class="f" style="left:472px;top:352px;width:32px;height:19px;"><i style="background:#fff"></i></div>
<div class="f" style="left:505px;top:352px;width:238px;height:19px;"><i style="background:#fff"></i></div>
<div class="f" style="left:745px;top:352px;width:32px;height:19px;"><i style="background:#fff"></i></div>
<div class="f" style="left:779px;top:352px;width:32px;height:19px;"><i style="background:#fff"></i></div>
<div class="f" style="left:813px;top:352px;width:80px;height:19px;"><i style="background:#fff"></i></div>
<div class="f" style="left:895px;top:352px;width:80px;height:19px;"><i style="background:#fff"></i></div>
<div style="left:976px;top:352px;width:17px;height:19px;background:#fff"></div>
<div style="left:977px;top:355px;width:11px;height:11px;background:#e4e6ee;border:1px solid #c8c8d0;border-right-color:#e8e8e8;border-bottom-color:#e8e8e8"></div>
<div style="left:992px;top:365px;width:1px;height:2px;background:#c0a0c8"></div>
<div class="f" style="left:40px;top:370px;width:33px;height:19px;"><i style="background:#fff"></i></div>
<div class="f" style="left:75px;top:370px;width:33px;height:19px;"><i style="background:#fff"></i></div>
<div class="f" style="left:109px;top:370px;width:33px;height:19px;"><i style="background:#fff"></i></div>
<div class="f" style="left:144px;top:370px;width:35px;height:19px;"><i style="background:#fff"></i></div>
<div class="f" style="left:180px;top:370px;width:56px;height:19px;"><i style="background:#fff"></i></div>
<div class="f" style="left:237px;top:370px;width:87px;height:19px;"><i style="background:#fff"></i></div>
<div class="f" style="left:325px;top:370px;width:24px;height:19px;"><i style="background:#fff"></i></div>
<div class="f" style="left:351px;top:370px;width:17px;height:19px;"><i style="background:#fff"></i></div>
<div class="f" style="left:369px;top:370px;width:34px;height:19px;"><i style="background:#fff"></i></div>
<div class="f" style="left:404px;top:370px;width:33px;height:19px;"><i style="background:#fff"></i></div>
<div class="f" style="left:439px;top:370px;width:32px;height:19px;"><i style="background:#fff"></i></div>
<div class="f" style="left:472px;top:370px;width:32px;height:19px;"><i style="background:#fff"></i></div>
<div class="f" style="left:505px;top:370px;width:238px;height:19px;"><i style="background:#fff"></i></div>
<div class="f" style="left:745px;top:370px;width:32px;height:19px;"><i style="background:#fff"></i></div>
<div class="f" style="left:779px;top:370px;width:32px;height:19px;"><i style="background:#fff"></i></div>
<div class="f" style="left:813px;top:370px;width:80px;height:19px;"><i style="background:#fff"></i></div>
<div class="f" style="left:895px;top:370px;width:80px;height:19px;"><i style="background:#fff"></i></div>
<div style="left:976px;top:370px;width:17px;height:19px;background:#fff"></div>
<div style="left:977px;top:373px;width:11px;height:11px;background:#e4e6ee;border:1px solid #c8c8d0;border-right-color:#e8e8e8;border-bottom-color:#e8e8e8"></div>
<div style="left:992px;top:383px;width:1px;height:2px;background:#c0a0c8"></div>
<div style="left:24px;top:277px;width:14px;height:112px;background:#e8ecf4;border:1px solid #d0dcec;border-radius:7px"></div>
<svg width="10" height="6" style="position:absolute;left:26px;top:282px"><path d="M1 5H9L5 1Z" fill="#5a5a78"/></svg>
<div style="left:25px;top:292px;width:12px;height:1px;background:#5a5a78"></div>
<div style="left:25px;top:293px;width:12px;height:1px;background:#fff"></div>
<div style="left:25px;top:373px;width:12px;height:1px;background:#5a5a78"></div>
<svg width="10" height="6" style="position:absolute;left:26px;top:378px"><path d="M1 1H9L5 5Z" fill="#5a5a78"/></svg>
<svg width="14" height="112" style="position:absolute;left:24px;top:277px"><path d="M9 48.5 L11 46.5 M3.5 52.5 L5.5 50.5 M9 56.5 L11 54.5 M3.5 60.5 L5.5 58.5 M9 64.5 L11 62.5 " stroke="#6f7c9c" stroke-width="1"/></svg>
<div class="l" style="right:940px;top:394px;">Empresa</div>
<div class="f" style="left:88px;top:391px;width:244px;height:18px;"><i style="background:#ffffc0"></i></div>
<div class="l" style="right:940px;top:414px;">Fornecedor</div>
<div class="f" style="left:88px;top:411px;width:244px;height:18px;"><i style="background:#ffffc0"></i></div>
<div class="l" style="right:589px;top:394px;">Oper. Baixa</div>
<div class="f" style="left:439px;top:391px;width:244px;height:18px;"><i style="background:#ffffc0"></i></div>
<div class="l" style="right:260px;top:394px;">Total</div>
<div class="f" style="left:768px;top:391px;width:44px;height:18px;"><i style="background:#ffffc0"></i></div>
<div class="l" style="left:768px;top:394px;width:44px;text-align:center;color:#8898c0">0</div>
<div class="f" style="left:813px;top:391px;width:80px;height:18px;"><i style="background:#ffffc0"></i></div>
<div class="f" style="left:895px;top:391px;width:80px;height:18px;"><i style="background:#ffffc0"></i></div>
<div class="l" style="right:260px;top:414px;">Total Sel.</div>
<div class="f" style="left:768px;top:411px;width:44px;height:18px;"><i style="background:#ffffc0"></i></div>
<div style="left:930px;top:414px;width:62px;height:17px;border:1px solid #a8a8a8;border-right-color:#b8cce4;border-bottom-color:#b8cce4;border-radius:2px"></div>
<div class="l" style="left:930px;top:417px;width:62px;text-align:center;color:#9a9a9a;text-shadow:1px 1px 0 #f0f0f0">Dev. Adto</div>
<div class="g" style="left:13px;top:449px;width:990px;height:204px"></div>
<div class="gap" style="left:437px;top:448px;width:143px"></div>
<div class="gt" style="left:358px;width:300px;text-align:center;top:443px;">Titulos - Notas</div>
<div class="l" style="left:55px;top:462px;">Empresa</div>
<div class="l" style="left:151px;top:462px;">Fornecedor</div>
<div class="l" style="left:312px;top:462px;">Titulo</div>
<div class="l" style="left:444px;top:462px;">Oper. Baixa</div>
<div class="l" style="left:822px;top:462px;">Valor Aberto</div>
<div class="l" style="left:916px;top:462px;">Vlr Baixa</div>
<div style="left:976px;top:454px;width:17px;height:19px;background:#ffffc0"></div>
<div style="left:977px;top:457px;width:11px;height:11px;background:#fff;border:1px solid #8a8a8a;border-right-color:#dcdcdc;border-bottom-color:#dcdcdc"></div>
<div style="left:992px;top:467px;width:1px;height:2px;background:#30208a"></div>
<div class="f" style="left:40px;top:476px;width:33px;height:19px;"><i style="background:#ffffc0"></i></div>
<div class="f" style="left:75px;top:476px;width:33px;height:19px;"><i style="background:#ffffc0"></i></div>
<div class="f" style="left:109px;top:476px;width:33px;height:19px;"><i style="background:#ffffc0"></i></div>
<div class="f" style="left:144px;top:476px;width:35px;height:19px;"><i style="background:#ffffc0"></i></div>
<div class="f" style="left:180px;top:476px;width:56px;height:19px;"><i style="background:#ffffc0"></i></div>
<div class="f" style="left:237px;top:476px;width:87px;height:19px;"><i style="background:#ffffc0"></i></div>
<div class="f" style="left:325px;top:476px;width:24px;height:19px;"><i style="background:#ffffc0"></i></div>
<div class="f" style="left:351px;top:476px;width:17px;height:19px;"><i style="background:#ffffc0"></i></div>
<div class="f" style="left:369px;top:476px;width:34px;height:19px;"><i style="background:#ffffc0"></i></div>
<div class="f" style="left:404px;top:476px;width:33px;height:19px;"><i style="background:#ffffc0"></i></div>
<div class="f" style="left:439px;top:476px;width:32px;height:19px;"><i style="background:#ffffc0"></i></div>
<div class="f" style="left:472px;top:476px;width:32px;height:19px;"><i style="background:#ffffc0"></i></div>
<div class="f" style="left:505px;top:476px;width:306px;height:19px;"><i style="background:#ffffc0"></i></div>
<div class="f" style="left:813px;top:476px;width:80px;height:19px;"><i style="background:#ffffc0"></i></div>
<div class="f" style="left:895px;top:476px;width:80px;height:19px;"><i style="background:#ffffc0"></i></div>
<div style="left:976px;top:476px;width:17px;height:19px;background:#ffffc0"></div>
<div style="left:977px;top:479px;width:11px;height:11px;background:#fff;border:1px solid #8a8a8a;border-right-color:#dcdcdc;border-bottom-color:#dcdcdc"></div>
<div style="left:992px;top:489px;width:1px;height:2px;background:#30208a"></div>
<div class="f" style="left:40px;top:495px;width:33px;height:19px;"><i style="background:#fff"></i></div>
<div class="f" style="left:75px;top:495px;width:33px;height:19px;"><i style="background:#fff"></i></div>
<div class="f" style="left:109px;top:495px;width:33px;height:19px;"><i style="background:#fff"></i></div>
<div class="f" style="left:144px;top:495px;width:35px;height:19px;"><i style="background:#fff"></i></div>
<div class="f" style="left:180px;top:495px;width:56px;height:19px;"><i style="background:#fff"></i></div>
<div class="f" style="left:237px;top:495px;width:87px;height:19px;"><i style="background:#fff"></i></div>
<div class="f" style="left:325px;top:495px;width:24px;height:19px;"><i style="background:#fff"></i></div>
<div class="f" style="left:351px;top:495px;width:17px;height:19px;"><i style="background:#fff"></i></div>
<div class="f" style="left:369px;top:495px;width:34px;height:19px;"><i style="background:#fff"></i></div>
<div class="f" style="left:404px;top:495px;width:33px;height:19px;"><i style="background:#fff"></i></div>
<div class="f" style="left:439px;top:495px;width:32px;height:19px;"><i style="background:#fff"></i></div>
<div class="f" style="left:472px;top:495px;width:32px;height:19px;"><i style="background:#fff"></i></div>
<div class="f" style="left:505px;top:495px;width:306px;height:19px;"><i style="background:#fff"></i></div>
<div class="f" style="left:813px;top:495px;width:80px;height:19px;"><i style="background:#fff"></i></div>
<div class="f" style="left:895px;top:495px;width:80px;height:19px;"><i style="background:#fff"></i></div>
<div style="left:976px;top:495px;width:17px;height:19px;background:#fff"></div>
<div style="left:977px;top:498px;width:11px;height:11px;background:#e4e6ee;border:1px solid #c8c8d0;border-right-color:#e8e8e8;border-bottom-color:#e8e8e8"></div>
<div style="left:992px;top:508px;width:1px;height:2px;background:#c0a0c8"></div>
<div class="f" style="left:40px;top:513px;width:33px;height:19px;"><i style="background:#fff"></i></div>
<div class="f" style="left:75px;top:513px;width:33px;height:19px;"><i style="background:#fff"></i></div>
<div class="f" style="left:109px;top:513px;width:33px;height:19px;"><i style="background:#fff"></i></div>
<div class="f" style="left:144px;top:513px;width:35px;height:19px;"><i style="background:#fff"></i></div>
<div class="f" style="left:180px;top:513px;width:56px;height:19px;"><i style="background:#fff"></i></div>
<div class="f" style="left:237px;top:513px;width:87px;height:19px;"><i style="background:#fff"></i></div>
<div class="f" style="left:325px;top:513px;width:24px;height:19px;"><i style="background:#fff"></i></div>
<div class="f" style="left:351px;top:513px;width:17px;height:19px;"><i style="background:#fff"></i></div>
<div class="f" style="left:369px;top:513px;width:34px;height:19px;"><i style="background:#fff"></i></div>
<div class="f" style="left:404px;top:513px;width:33px;height:19px;"><i style="background:#fff"></i></div>
<div class="f" style="left:439px;top:513px;width:32px;height:19px;"><i style="background:#fff"></i></div>
<div class="f" style="left:472px;top:513px;width:32px;height:19px;"><i style="background:#fff"></i></div>
<div class="f" style="left:505px;top:513px;width:306px;height:19px;"><i style="background:#fff"></i></div>
<div class="f" style="left:813px;top:513px;width:80px;height:19px;"><i style="background:#fff"></i></div>
<div class="f" style="left:895px;top:513px;width:80px;height:19px;"><i style="background:#fff"></i></div>
<div style="left:976px;top:513px;width:17px;height:19px;background:#fff"></div>
<div style="left:977px;top:516px;width:11px;height:11px;background:#e4e6ee;border:1px solid #c8c8d0;border-right-color:#e8e8e8;border-bottom-color:#e8e8e8"></div>
<div style="left:992px;top:526px;width:1px;height:2px;background:#c0a0c8"></div>
<div class="f" style="left:40px;top:532px;width:33px;height:19px;"><i style="background:#fff"></i></div>
<div class="f" style="left:75px;top:532px;width:33px;height:19px;"><i style="background:#fff"></i></div>
<div class="f" style="left:109px;top:532px;width:33px;height:19px;"><i style="background:#fff"></i></div>
<div class="f" style="left:144px;top:532px;width:35px;height:19px;"><i style="background:#fff"></i></div>
<div class="f" style="left:180px;top:532px;width:56px;height:19px;"><i style="background:#fff"></i></div>
<div class="f" style="left:237px;top:532px;width:87px;height:19px;"><i style="background:#fff"></i></div>
<div class="f" style="left:325px;top:532px;width:24px;height:19px;"><i style="background:#fff"></i></div>
<div class="f" style="left:351px;top:532px;width:17px;height:19px;"><i style="background:#fff"></i></div>
<div class="f" style="left:369px;top:532px;width:34px;height:19px;"><i style="background:#fff"></i></div>
<div class="f" style="left:404px;top:532px;width:33px;height:19px;"><i style="background:#fff"></i></div>
<div class="f" style="left:439px;top:532px;width:32px;height:19px;"><i style="background:#fff"></i></div>
<div class="f" style="left:472px;top:532px;width:32px;height:19px;"><i style="background:#fff"></i></div>
<div class="f" style="left:505px;top:532px;width:306px;height:19px;"><i style="background:#fff"></i></div>
<div class="f" style="left:813px;top:532px;width:80px;height:19px;"><i style="background:#fff"></i></div>
<div class="f" style="left:895px;top:532px;width:80px;height:19px;"><i style="background:#fff"></i></div>
<div style="left:976px;top:532px;width:17px;height:19px;background:#fff"></div>
<div style="left:977px;top:535px;width:11px;height:11px;background:#e4e6ee;border:1px solid #c8c8d0;border-right-color:#e8e8e8;border-bottom-color:#e8e8e8"></div>
<div style="left:992px;top:545px;width:1px;height:2px;background:#c0a0c8"></div>
<div class="f" style="left:40px;top:551px;width:33px;height:19px;"><i style="background:#fff"></i></div>
<div class="f" style="left:75px;top:551px;width:33px;height:19px;"><i style="background:#fff"></i></div>
<div class="f" style="left:109px;top:551px;width:33px;height:19px;"><i style="background:#fff"></i></div>
<div class="f" style="left:144px;top:551px;width:35px;height:19px;"><i style="background:#fff"></i></div>
<div class="f" style="left:180px;top:551px;width:56px;height:19px;"><i style="background:#fff"></i></div>
<div class="f" style="left:237px;top:551px;width:87px;height:19px;"><i style="background:#fff"></i></div>
<div class="f" style="left:325px;top:551px;width:24px;height:19px;"><i style="background:#fff"></i></div>
<div class="f" style="left:351px;top:551px;width:17px;height:19px;"><i style="background:#fff"></i></div>
<div class="f" style="left:369px;top:551px;width:34px;height:19px;"><i style="background:#fff"></i></div>
<div class="f" style="left:404px;top:551px;width:33px;height:19px;"><i style="background:#fff"></i></div>
<div class="f" style="left:439px;top:551px;width:32px;height:19px;"><i style="background:#fff"></i></div>
<div class="f" style="left:472px;top:551px;width:32px;height:19px;"><i style="background:#fff"></i></div>
<div class="f" style="left:505px;top:551px;width:306px;height:19px;"><i style="background:#fff"></i></div>
<div class="f" style="left:813px;top:551px;width:80px;height:19px;"><i style="background:#fff"></i></div>
<div class="f" style="left:895px;top:551px;width:80px;height:19px;"><i style="background:#fff"></i></div>
<div style="left:976px;top:551px;width:17px;height:19px;background:#fff"></div>
<div style="left:977px;top:554px;width:11px;height:11px;background:#e4e6ee;border:1px solid #c8c8d0;border-right-color:#e8e8e8;border-bottom-color:#e8e8e8"></div>
<div style="left:992px;top:564px;width:1px;height:2px;background:#c0a0c8"></div>
<div class="f" style="left:40px;top:569px;width:33px;height:19px;"><i style="background:#fff"></i></div>
<div class="f" style="left:75px;top:569px;width:33px;height:19px;"><i style="background:#fff"></i></div>
<div class="f" style="left:109px;top:569px;width:33px;height:19px;"><i style="background:#fff"></i></div>
<div class="f" style="left:144px;top:569px;width:35px;height:19px;"><i style="background:#fff"></i></div>
<div class="f" style="left:180px;top:569px;width:56px;height:19px;"><i style="background:#fff"></i></div>
<div class="f" style="left:237px;top:569px;width:87px;height:19px;"><i style="background:#fff"></i></div>
<div class="f" style="left:325px;top:569px;width:24px;height:19px;"><i style="background:#fff"></i></div>
<div class="f" style="left:351px;top:569px;width:17px;height:19px;"><i style="background:#fff"></i></div>
<div class="f" style="left:369px;top:569px;width:34px;height:19px;"><i style="background:#fff"></i></div>
<div class="f" style="left:404px;top:569px;width:33px;height:19px;"><i style="background:#fff"></i></div>
<div class="f" style="left:439px;top:569px;width:32px;height:19px;"><i style="background:#fff"></i></div>
<div class="f" style="left:472px;top:569px;width:32px;height:19px;"><i style="background:#fff"></i></div>
<div class="f" style="left:505px;top:569px;width:306px;height:19px;"><i style="background:#fff"></i></div>
<div class="f" style="left:813px;top:569px;width:80px;height:19px;"><i style="background:#fff"></i></div>
<div class="f" style="left:895px;top:569px;width:80px;height:19px;"><i style="background:#fff"></i></div>
<div style="left:976px;top:569px;width:17px;height:19px;background:#fff"></div>
<div style="left:977px;top:572px;width:11px;height:11px;background:#e4e6ee;border:1px solid #c8c8d0;border-right-color:#e8e8e8;border-bottom-color:#e8e8e8"></div>
<div style="left:992px;top:582px;width:1px;height:2px;background:#c0a0c8"></div>
<div class="f" style="left:40px;top:588px;width:33px;height:19px;"><i style="background:#fff"></i></div>
<div class="f" style="left:75px;top:588px;width:33px;height:19px;"><i style="background:#fff"></i></div>
<div class="f" style="left:109px;top:588px;width:33px;height:19px;"><i style="background:#fff"></i></div>
<div class="f" style="left:144px;top:588px;width:35px;height:19px;"><i style="background:#fff"></i></div>
<div class="f" style="left:180px;top:588px;width:56px;height:19px;"><i style="background:#fff"></i></div>
<div class="f" style="left:237px;top:588px;width:87px;height:19px;"><i style="background:#fff"></i></div>
<div class="f" style="left:325px;top:588px;width:24px;height:19px;"><i style="background:#fff"></i></div>
<div class="f" style="left:351px;top:588px;width:17px;height:19px;"><i style="background:#fff"></i></div>
<div class="f" style="left:369px;top:588px;width:34px;height:19px;"><i style="background:#fff"></i></div>
<div class="f" style="left:404px;top:588px;width:33px;height:19px;"><i style="background:#fff"></i></div>
<div class="f" style="left:439px;top:588px;width:32px;height:19px;"><i style="background:#fff"></i></div>
<div class="f" style="left:472px;top:588px;width:32px;height:19px;"><i style="background:#fff"></i></div>
<div class="f" style="left:505px;top:588px;width:306px;height:19px;"><i style="background:#fff"></i></div>
<div class="f" style="left:813px;top:588px;width:80px;height:19px;"><i style="background:#fff"></i></div>
<div class="f" style="left:895px;top:588px;width:80px;height:19px;"><i style="background:#fff"></i></div>
<div style="left:976px;top:588px;width:17px;height:19px;background:#fff"></div>
<div style="left:977px;top:591px;width:11px;height:11px;background:#e4e6ee;border:1px solid #c8c8d0;border-right-color:#e8e8e8;border-bottom-color:#e8e8e8"></div>
<div style="left:992px;top:601px;width:1px;height:2px;background:#c0a0c8"></div>
<div style="left:24px;top:476px;width:14px;height:130px;background:#e8ecf4;border:1px solid #d0dcec;border-radius:7px"></div>
<svg width="10" height="6" style="position:absolute;left:26px;top:481px"><path d="M1 5H9L5 1Z" fill="#5a5a78"/></svg>
<div style="left:25px;top:491px;width:12px;height:1px;background:#5a5a78"></div>
<div style="left:25px;top:492px;width:12px;height:1px;background:#fff"></div>
<div style="left:25px;top:590px;width:12px;height:1px;background:#5a5a78"></div>
<svg width="10" height="6" style="position:absolute;left:26px;top:595px"><path d="M1 1H9L5 5Z" fill="#5a5a78"/></svg>
<svg width="14" height="130" style="position:absolute;left:24px;top:476px"><path d="M9 50.5 L11 48.5 M3.5 56.0 L5.5 54.0 M9 59.5 L11 57.5 M3.5 63.5 L5.5 61.5 M9 67.0 L11 65.0 M3.5 71.5 L5.5 69.5 M9 75.0 L11 73.0 " stroke="#6f7c9c" stroke-width="1"/></svg>
<div class="l" style="right:940px;top:612px;">Empresa</div>
<div class="f" style="left:88px;top:609px;width:244px;height:17px;"><i style="background:#ffffc0"></i></div>
<div class="l" style="right:940px;top:632px;">Fornecedor</div>
<div class="f" style="left:88px;top:629px;width:244px;height:17px;"><i style="background:#ffffc0"></i></div>
<div class="l" style="right:260px;top:612px;">Total</div>
<div class="f" style="left:768px;top:609px;width:44px;height:17px;"><i style="background:#ffffc0"></i></div>
<div class="l" style="left:768px;top:612px;width:44px;text-align:center;color:#8898c0">0</div>
<div class="f" style="left:813px;top:609px;width:80px;height:17px;"><i style="background:#ffffc0"></i></div>
<div class="f" style="left:895px;top:609px;width:80px;height:17px;"><i style="background:#ffffc0"></i></div>
<div class="l" style="right:260px;top:632px;">Total Sel.</div>
<div class="f" style="left:768px;top:629px;width:44px;height:17px;"><i style="background:#ffffc0"></i></div>
<div style="left:930px;top:630px;width:62px;height:17px;border:1px solid #a8a8a8;border-right-color:#b8cce4;border-bottom-color:#b8cce4;border-radius:2px"></div>
<div class="l" style="left:930px;top:633px;width:62px;text-align:center;color:#9a9a9a;text-shadow:1px 1px 0 #f0f0f0">Baixar</div>
<div style="left:6px;top:669px;width:1014px;height:16px;background:#c0c0c0"></div>
<div style="left:6px;top:669px;width:363px;height:16px;background:#ccd9ea"></div>
<div style="left:126px;top:669px;width:3px;height:15px;background:#c0c0c0"></div>
<div style="left:247px;top:669px;width:3px;height:15px;background:#c0c0c0"></div>
<div style="left:368px;top:669px;width:3px;height:15px;background:#c0c0c0"></div>
<div style="left:371px;top:669px;width:118px;height:16px;background:#94b5da;border-left:1px solid #7090b8;border-right:1px solid #7090b8;border-top-right-radius:3px;border-top-left-radius:3px"></div>
<div style="left:6px;top:684px;width:1014px;height:1px;background:#cfd8e4"></div>
<div class="l" style="left:23px;top:673px;color:#222">Baixa Fornecedor</div>
<div class="l" style="left:141px;top:673px;color:#222">Baixa Adiantamento</div>
<div class="l" style="left:278px;top:673px;color:#222">Baixar Titulos</div>
<div class="l" style="left:379px;top:673px;color:#000">Baixar Adiantamentos</div>
</body></html>
